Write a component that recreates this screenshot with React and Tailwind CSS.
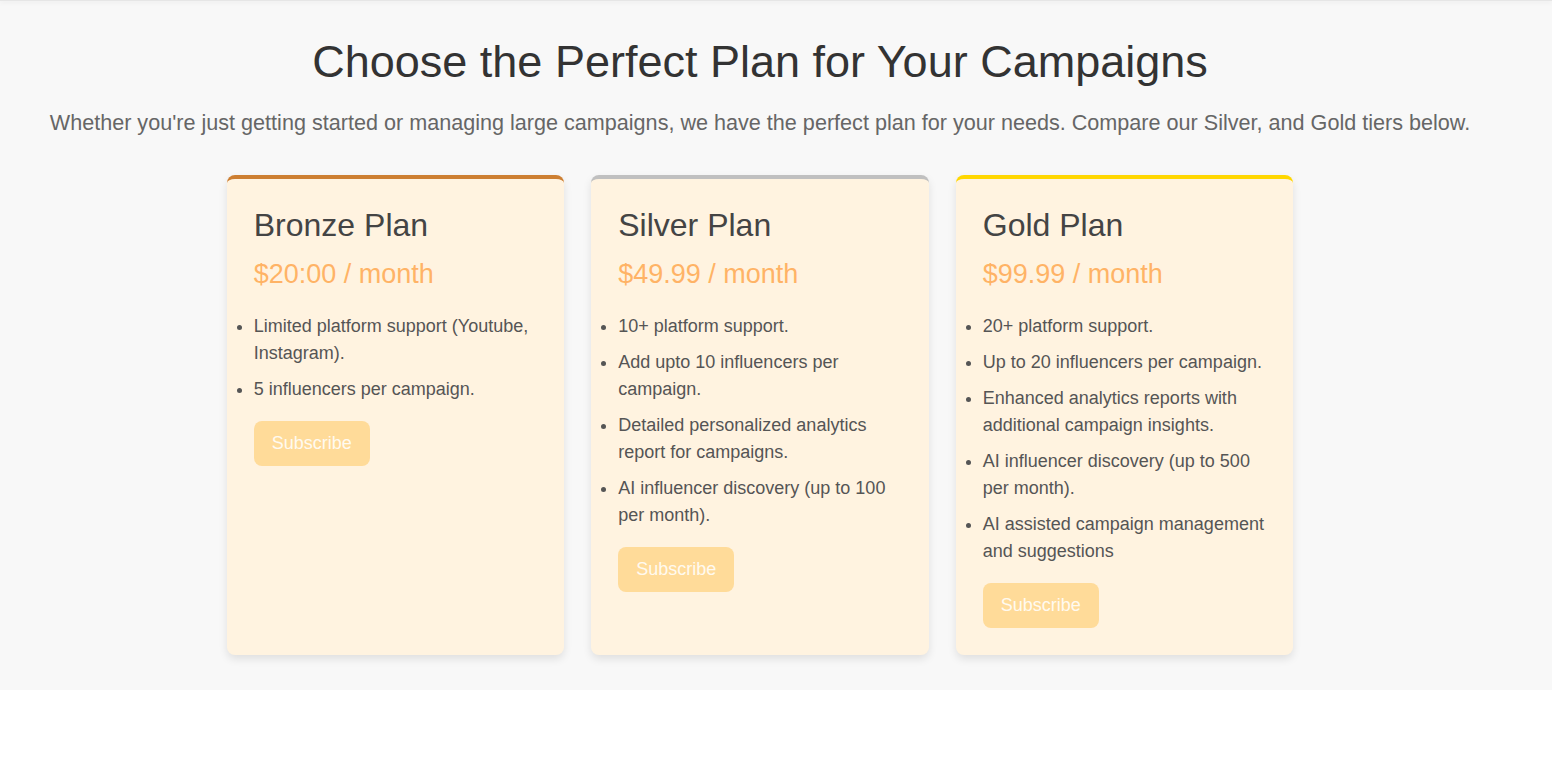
import React from "react";

const plans = [
  {
    name: "Bronze Plan",
    price: "$20:00 / month",
    border: "border-t-[#cd7f32]",
    features: ["Limited platform support (Youtube, Instagram).", "5 influencers per campaign."],
  },
  {
    name: "Silver Plan",
    price: "$49.99 / month",
    border: "border-t-[#c0c0c0]",
    features: [
      "10+ platform support.",
      "Add upto 10 influencers per campaign.",
      "Detailed personalized analytics report for campaigns.",
      "AI influencer discovery (up to 100 per month).",
    ],
  },
  {
    name: "Gold Plan",
    price: "$99.99 / month",
    border: "border-t-[#ffd700]",
    features: [
      "20+ platform support.",
      "Up to 20 influencers per campaign.",
      "Enhanced analytics reports with additional campaign insights.",
      "AI influencer discovery (up to 500 per month).",
      "AI assisted campaign management and suggestions",
    ],
  },
];

export default function App() {
  return (
    <div className="min-h-[774px] bg-white" style={{ fontFamily: '"Liberation Sans", Arial, sans-serif' }}>
      <div className="h-[1px] bg-[#e6e6e6] shadow-[0_1px_5px_rgba(0,0,0,0.14)] relative z-10" />
      <section className="bg-[#f8f8f8] pr-[32px] pt-[35px] pb-[35px]">
        <h1 className="text-center text-[45px] leading-[52px] text-[#333] font-normal">
          Choose the Perfect Plan for Your Campaigns
        </h1>
        <p className="text-center text-[21.6px] leading-[25px] text-[#666] mt-[22px]">
          Whether you're just getting started or managing large campaigns, we have the perfect plan for your needs. Compare our Silver, and Gold tiers below.
        </p>
        <div className="flex justify-center gap-[27px] mt-[40px]">
          {plans.map((p) => (
            <div
              key={p.name}
              className={`w-[337.5px] bg-[#fff3e0] rounded-[8px] border-t-4 ${p.border} shadow-[0_4px_8px_rgba(0,0,0,0.1)] px-[27px] pt-[28px] pb-[27px] flex flex-col`}
            >
              <h2 className="text-[32px] leading-[36px] text-[#444] font-normal">{p.name}</h2>
              <div className="text-[27px] leading-[31px] text-[#ffb366] mt-[16px]">{p.price}</div>
              <ul className="list-disc list-outside pl-0 mt-[23px] mb-[9px] text-[18px] leading-[27px] text-[#555]">
                {p.features.map((f) => (
                  <li key={f} className="mb-[9px] marker:text-[#555]">
                    {f}
                  </li>
                ))}
              </ul>
              <div>
                <button className="bg-[#ffdb99] text-[#fffaf0] text-[18px] leading-[21px] px-[18px] py-[12px] rounded-[8px]">
                  Subscribe
                </button>
              </div>
            </div>
          ))}
        </div>
      </section>
    </div>
  );
}
